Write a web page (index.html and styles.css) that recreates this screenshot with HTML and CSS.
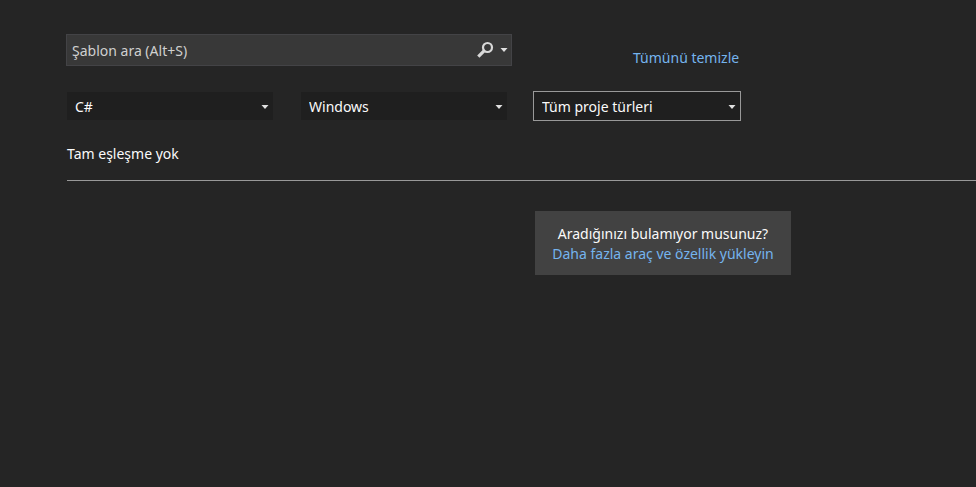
FILE: index.html
```html
<!DOCTYPE html>
<html lang="tr">
<head>
<meta charset="utf-8">
<meta name="viewport" content="width=device-width, initial-scale=1">
<title>Yeni proje oluştur</title>
<link rel="stylesheet" href="styles.css">
</head>
<body>
<main class="page">
  <form class="toolbar">
    <div class="search">
      <input class="search-input" type="search" aria-label="Şablon ara" placeholder="Şablon ara (Alt+S)">
      <button class="icon-button" type="button" aria-label="Ara">
        <svg width="18" height="18" viewBox="0 0 18 18" fill="none" stroke="currentColor" aria-hidden="true">
          <circle cx="10.5" cy="6.5" r="4.5" stroke-width="2.2"/>
          <path d="M7.3 9.7 1.3 15.7" stroke-width="3.2"/>
        </svg>
      </button>
      <button class="icon-button" type="button" aria-label="Arama seçenekleri">
        <svg class="arrow" viewBox="0 0 8 4" aria-hidden="true"><path d="M.5 0h7L4 4z"/></svg>
      </button>
    </div>
    <a class="link" href="#">Tümünü temizle</a>
  </form>

  <div class="filters">
    <div class="filter">
      <select class="filter-select" aria-label="Dil"><option>C#</option></select>
      <svg class="arrow filter-arrow" viewBox="0 0 8 4" aria-hidden="true"><path d="M.5 0h7L4 4z"/></svg>
    </div>
    <div class="filter">
      <select class="filter-select" aria-label="Platform"><option>Windows</option></select>
      <svg class="arrow filter-arrow" viewBox="0 0 8 4" aria-hidden="true"><path d="M.5 0h7L4 4z"/></svg>
    </div>
    <div class="filter filter-active">
      <select class="filter-select" aria-label="Proje türü"><option>Tüm proje türleri</option></select>
      <svg class="arrow filter-arrow" viewBox="0 0 8 4" aria-hidden="true"><path d="M.5 0h7L4 4z"/></svg>
    </div>
  </div>

  <p class="status">Tam eşleşme yok</p>

  <section class="hint">
    <p class="hint-title">Aradığınızı bulamıyor musunuz?</p>
    <a class="link" href="#">Daha fazla araç ve özellik yükleyin</a>
  </section>
</main>
</body>
</html>
```
FILE: styles.css
```css
* {
  box-sizing: border-box;
}

body {
  margin: 0;
  min-height: 100vh;
  background: #252525;
  color: #fafafa;
  font: 14px/20px "Noto Sans", "Open Sans", sans-serif;
}

p {
  margin: 0;
}

input,
select,
button {
  margin: 0;
  font: inherit;
  color: inherit;
  border: 0;
  background: none;
}

.page {
  padding: 34px 0 0 66px;
}

.toolbar {
  display: grid;
  grid-template-columns: 446px auto;
  justify-content: start;
  align-items: center;
  column-gap: 121px;
}

.toolbar .link {
  padding-top: 14px;
  margin-bottom: -2px;
}

.search {
  display: flex;
  align-items: center;
  height: 32px;
  padding-right: 3px;
  border: 1px solid #434346;
  background: #383838;
  color: #d8d8d8;
}

.search-input {
  flex: 1;
  min-width: 0;
  padding: 1px 5px 0;
  outline: 0;
}

.search-input::placeholder {
  color: #d0d0d0;
  opacity: 1;
}

.icon-button {
  display: flex;
  padding: 0;
}

.icon-button + .icon-button {
  padding: 8px 0 8px 5px;
}

.arrow {
  width: 8px;
  height: 4px;
  fill: #e0e0e0;
}

.link {
  color: #75b4ee;
  text-decoration: none;
}

.filters {
  display: flex;
  align-items: center;
  gap: 28px;
  padding: 25px 0 0 1px;
}

.filter {
  position: relative;
  flex: 0 1 206px;
  height: 28px;
  background: #1f1f1f;
}

.filter-active {
  flex-basis: 208px;
  height: 30px;
  margin-left: -2px;
  border: 1px solid #999;
}

.filter-select {
  width: 100%;
  height: 100%;
  padding: 1px 8px 0;
  appearance: none;
  outline: 0;
}

.filter-select option {
  background: #1f1f1f;
}

.filter-arrow {
  position: absolute;
  right: 4px;
  top: calc(50% - 1px);
  pointer-events: none;
}

.status {
  margin-left: 1px;
  padding: 23px 0 16px;
  border-bottom: 1px solid #999;
}

.hint {
  width: fit-content;
  min-width: 256px;
  margin: 30px 0 0 469px;
  padding: 13px 12px 11px;
  background: #424242;
  text-align: center;
}
```
